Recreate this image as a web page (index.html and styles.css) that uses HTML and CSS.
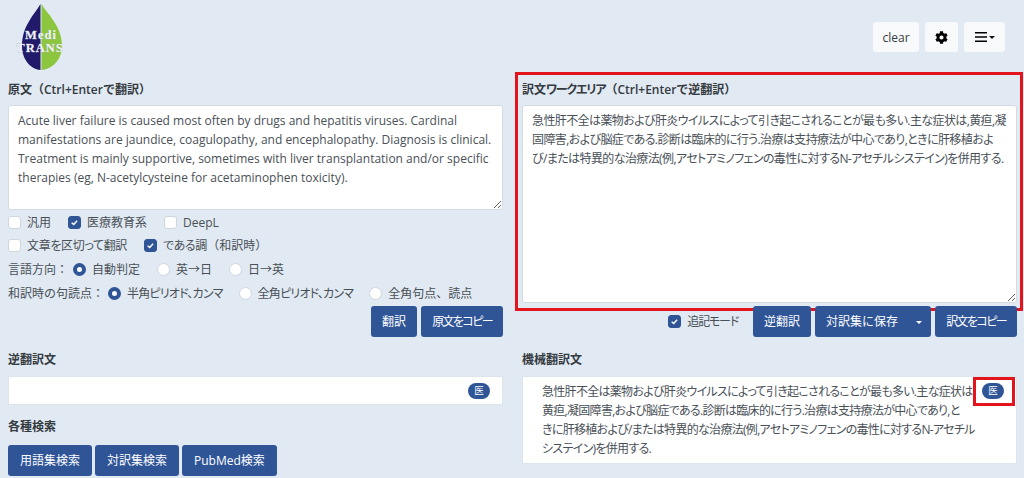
FILE: index.html
```html
<!DOCTYPE html>
<html lang="ja">
<head>
  <meta charset="UTF-8">
  <title>MediTRANS</title>
  <link rel="stylesheet" href="styles.css">
</head>
<body>

  <header class="topbar">
    <svg class="logo" viewBox="0 0 46 66" width="46" height="66">
      <path d="M22.500 0C16 11 4 22 4 42c0 13 8 23 18.500 24z" fill="#211a6b"/>
      <path d="M23.500 0C30 11 44 22 44 42c0 13-9 23-20.500 24z" fill="#8cc63f"/>
      <text x="23" y="35" class="logo__top">Medi</text>
      <text x="22" y="48" class="logo__bottom">TRANS</text>
    </svg>
    <div class="topbar__btns">
      <button class="btn btn-light btn-clear">clear</button>
      <button class="btn btn-light btn-icon">
        <svg viewBox="0 0 512 512" width="13" height="13"><path d="M487.400 315.700l-42.600-24.600c4.300-23.200 4.300-47 0-70.200l42.600-24.600c4.900-2.800 7.100-8.600 5.500-14-11.100-35.600-30-67.800-54.700-94.600-3.800-4.100-10-5.100-14.800-2.300L380.800 110c-17.900-15.400-38.500-27.300-60.800-35.100V25.800c0-5.600-3.900-10.500-9.400-11.700-36.700-8.200-74.300-7.800-109.200 0-5.500 1.200-9.400 6.100-9.400 11.700V75c-22.200 7.900-42.800 19.800-60.800 35.100L88.700 85.500c-4.900-2.800-11-1.900-14.800 2.300-24.700 26.700-43.600 58.900-54.700 94.600-1.700 5.400.6 11.200 5.500 14L67.300 221c-4.300 23.200-4.300 47 0 70.200l-42.600 24.600c-4.900 2.800-7.100 8.600-5.500 14 11.100 35.600 30 67.800 54.700 94.600 3.800 4.100 10 5.100 14.800 2.300l42.600-24.600c17.900 15.400 38.500 27.300 60.800 35.100v49.200c0 5.600 3.900 10.500 9.400 11.700 36.700 8.200 74.300 7.800 109.200 0 5.500-1.200 9.400-6.100 9.400-11.700v-49.200c22.200-7.900 42.800-19.800 60.800-35.100l42.600 24.600c4.900 2.800 11 1.900 14.800-2.300 24.700-26.700 43.600-58.900 54.700-94.600 1.500-5.500-.7-11.300-5.600-14.100zM256 336c-44.100 0-80-35.900-80-80s35.900-80 80-80 80 35.900 80 80-35.900 80-80 80z"/></svg>
      </button>
      <button class="btn btn-light btn-menu">
        <svg viewBox="0 0 12 10" width="12" height="10"><path d="M0 0h12v1.600H0zM0 4.200h12v1.600H0zM0 8.400h12V10H0z"/></svg>
        <span class="caret"></span>
      </button>
    </div>
  </header>

  <main class="columns">
    <section class="col">
      <label class="title">原文（Ctrl+Enterで翻訳）</label>
      <textarea class="area area--src">Acute liver failure is caused most often by drugs and hepatitis viruses. Cardinal manifestations are jaundice, coagulopathy, and encephalopathy. Diagnosis is clinical. Treatment is mainly supportive, sometimes with liver transplantation and/or specific therapies (eg, N-acetylcysteine for acetaminophen toxicity).</textarea>

      <div class="opts opts--first">
        <span class="check">汎用</span>
        <span class="check check--on">医療教育系</span>
        <span class="check">DeepL</span>
      </div>
      <div class="opts opts--second">
        <span class="check"><span class="narrow">文章を区切って翻訳</span></span>
        <span class="check check--on"><span><span class="narrow">である</span>調（和訳時）</span></span>
      </div>
      <div class="opts opts--radio">
        <span class="opts__label">言語方向：</span>
        <span class="radio radio--on">自動判定</span>
        <span class="radio">英→日</span>
        <span class="radio">日→英</span>
      </div>
      <div class="opts opts--radio opts--punct">
        <span class="opts__label">和訳時の句読点：</span>
        <span class="radio radio--on"><span class="narrow">半角ピリオド、カンマ</span></span>
        <span class="radio"><span class="narrow">全角ピリオド、カンマ</span></span>
        <span class="radio">全角句点、読点</span>
      </div>

      <div class="actions actions--src">
        <button class="btn btn-primary">翻訳</button>
        <button class="btn btn-primary"><span class="narrow">原文をコピー</span></button>
      </div>

      <label class="title title--back">逆翻訳文</label>
      <div class="output output--back"><span class="badge">医</span></div>

      <label class="title title--search">各種検索</label>
      <div class="search-btns">
        <button class="btn btn-primary">用語集検索</button>
        <button class="btn btn-primary">対訳集検索</button>
        <button class="btn btn-primary">PubMed検索</button>
      </div>
    </section>

    <section class="col">
      <label class="title">訳文<span class="narrow">ワークエリア</span>（Ctrl+Enterで逆翻訳）</label>
      <textarea class="area area--work">急性肝不全は薬物および肝炎ウイルスによって引き起こされることが最も多い.主な症状は,黄疸,凝固障害,および脳症である.診断は臨床的に行う.治療は支持療法が中心であり,ときに肝移植および/または特異的な治療法(例,アセトアミノフェンの毒性に対するN-アセチルシステイン)を併用する.</textarea>

      <div class="actions actions--work">
        <span class="check check--on"><span class="narrow">追記モード</span></span>
        <button class="btn btn-primary">逆翻訳</button>
        <button class="btn btn-primary btn-split">対訳集に保存<span class="caret caret--white"></span></button>
        <button class="btn btn-primary"><span class="narrow">訳文をコピー</span></button>
      </div>

      <label class="title title--mt">機械翻訳文</label>
      <div class="output output--mt">
        <span class="badge">医</span>
        急性肝不全は薬物および肝炎ウイルスによって引き起こされることが最も多い.主な症状は,<br>
        黄疸,凝固障害,および脳症である.診断は臨床的に行う.治療は支持療法が中心であり,と<br>
        きに肝移植および/または特異的な治療法(例,アセトアミノフェンの毒性に対するN-アセチル<br>
        システイン)を併用する.
      </div>
    </section>
  </main>

  <div class="mark mark--work"></div>
  <div class="mark mark--badge"></div>

</body>
</html>
```

FILE: styles.css
```css
*, *::before {
  box-sizing: border-box;
}

html, body {
  height: 478px;
  overflow: hidden;
}

body {
  position: relative;
  margin: 0;
  background: #e1e9f2;
  color: #495057;
  font-family: "Open Sans", "Noto Sans CJK JP", sans-serif;
  font-size: 12px;
  line-height: 19px;
}

.narrow {
  font-feature-settings: "palt";
  letter-spacing: -.6px;
}

.topbar {
  height: 80px;
  padding: 4px 19px 0 18px;
  display: flex;
  justify-content: space-between;
  align-items: flex-start;
}

.logo {
  overflow: visible;
}

.logo text {
  fill: #f0f2f8;
  stroke: #aab3bf;
  stroke-width: .4px;
  paint-order: stroke;
  font-family: "Liberation Serif", serif;
  font-weight: bold;
  text-anchor: middle;
}

.logo__top {
  font-size: 12.500px;
  letter-spacing: 1px;
}

.logo__bottom {
  font-size: 12.500px;
  letter-spacing: 1px;
}

.topbar__btns {
  display: flex;
  gap: 6px;
  margin-top: 18px;
}

.btn {
  height: 31px;
  padding: 0 11px;
  border: 1px solid transparent;
  border-radius: 3px;
  font: inherit;
  white-space: nowrap;
}

.btn-light {
  height: 30px;
  background: #f8f9fa;
  color: #343a40;
  display: flex;
  align-items: center;
}

.btn-clear {
  width: 46px;
  padding: 0;
  justify-content: center;
}

.btn-icon {
  width: 33px;
  justify-content: center;
  padding: 0;
}

.btn-menu {
  width: 41px;
  justify-content: center;
  padding: 0;
  gap: 2px;
}

.btn-primary {
  background: #2f5597;
  color: #fff;
}

.caret {
  display: inline-block;
  border-top: 3.500px solid #111;
  border-left: 3.500px solid transparent;
  border-right: 3.500px solid transparent;
}

.caret--white {
  border-top-color: #fff;
  margin-left: 18px;
  vertical-align: 2px;
}

.columns {
  display: flex;
  gap: 19px;
  padding: 0 7px 0 8px;
}

.col {
  width: 495px;
}

.title {
  display: block;
  height: 25px;
  color: #343a40;
  font-weight: 600;
}

.title .narrow {
  letter-spacing: -1.200px;
}

.area {
  display: block;
  width: 100%;
  padding: 5px 9px;
  border: 1px solid #d4dbe3;
  border-radius: 3px;
  background: #fff;
  color: #495057;
  font: inherit;
  outline: none;
}

.area--src {
  height: 105px;
}

.area--work {
  height: 198px;
  padding-right: 10px;
  font-feature-settings: "palt";
  letter-spacing: -.6px;
}

.opts {
  display: flex;
  height: 23px;
  align-items: center;
  gap: 17px;
}

.opts--first {
  margin-top: 1px;
}

.opts--second .narrow {
  letter-spacing: -.35px;
}

.opts--radio {
  height: 24px;
}

.opts--punct {
  gap: 16px;
}

.opts--punct .narrow {
  letter-spacing: -.8px;
}

.check, .radio {
  display: inline-flex;
  align-items: center;
  gap: 6px;
}

.check::before, .radio::before {
  content: "";
  width: 13px;
  height: 13px;
  flex: none;
  border: 1px solid #cfd6de;
  border-radius: 3px;
  background: #fff;
}

.radio::before {
  border-radius: 50%;
}

.check--on::before {
  border-color: #2f5597;
  background: #2f5597 url("data:image/svg+xml,%3Csvg xmlns='http://www.w3.org/2000/svg' viewBox='0 0 8 8'%3E%3Cpath fill='none' stroke='%23fff' stroke-width='1.300' d='M1.500 4.200l1.800 1.600 3-3.300'/%3E%3C/svg%3E") center / 9px no-repeat;
}

.radio--on::before {
  border: 4px solid #2f5597;
}

.opts__label {
  margin-right: -12px;
}

.actions {
  display: flex;
  justify-content: flex-end;
  align-items: center;
  gap: 4px;
}

.actions .btn {
  padding: 0 10px;
}

.actions .btn .narrow {
  letter-spacing: -1.600px;
}

.actions .btn-split {
  padding-right: 8px;
}

.actions--src {
  margin-top: 1px;
}

.actions--work {
  margin-top: 3px;
}

.actions--work .btn {
  position: relative;
  z-index: 1;
}

.actions--work .check {
  margin-right: 11px;
}

.actions--work .check .narrow {
  letter-spacing: -1.200px;
}

.title--back {
  margin-top: 13px;
  height: 26px;
}

.title--mt {
  margin-top: 13px;
  height: 26px;
}

.title--search {
  margin-top: 12px;
  height: 28px;
}

.output {
  position: relative;
  background: #fff;
  border: 1px solid #dde4ec;
}

.output--back {
  height: 29px;
}

.output--mt {
  height: 88px;
  padding: 5px 0 0 19px;
  white-space: nowrap;
  font-feature-settings: "palt";
  letter-spacing: -.7px;
}

.badge {
  position: absolute;
  top: 6px;
  right: 12px;
  width: 22px;
  height: 16px;
  border-radius: 8px;
  background: #2f5597;
  color: #fff;
  font-size: 9.500px;
  letter-spacing: 0;
  line-height: 16px;
  text-align: center;
}

.search-btns {
  display: flex;
  gap: 3px;
}

.mark {
  position: absolute;
  border: 3px solid #e3141c;
}

.mark--work {
  left: 515px;
  top: 72px;
  width: 508px;
  height: 239px;
}

.mark--badge {
  left: 973px;
  top: 377px;
  width: 42px;
  height: 29px;
}
```
